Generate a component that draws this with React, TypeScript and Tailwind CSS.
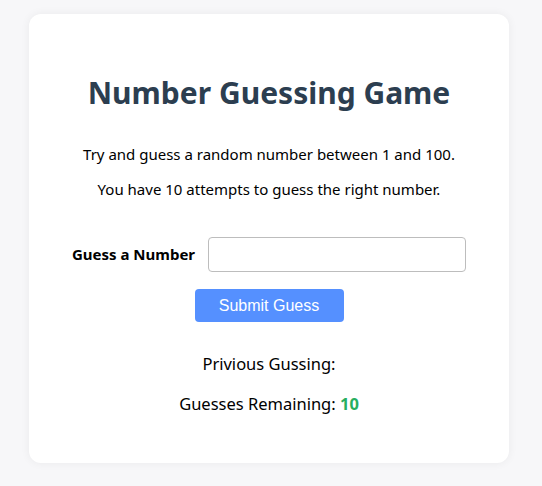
import { useState } from 'react';

export default function App() {
  const [guess, setGuess] = useState('');
  const remaining = 10;

  return (
    <div className="min-h-[486px] w-full bg-[#f7f7f9] pt-[14px] pl-[29px] font-['Noto_Sans',_sans-serif]">
      <div className="w-[480px] h-[449px] rounded-xl bg-white shadow-[0_0_10px_rgba(0,0,0,0.06)] px-5 pt-[60px] text-center">
        {/* Title */}
        <h1 className="text-[30px] leading-[38px] font-bold text-[#2c3e50]">Number Guessing Game</h1>

        {/* Intro */}
        <p className="mt-[32px] text-[15px] leading-5 text-black">
          Try and guess a random number between 1 and 100.
        </p>
        <p className="mt-[15px] text-[15px] leading-5 text-black">
          You have 10 attempts to guess the right number.
        </p>

        {/* Form */}
        <div className="mt-[38px] flex items-center justify-center gap-[13px]">
          <label className="text-[15px] font-bold text-black">Guess a Number</label>
          <input
            type="number"
            value={guess}
            onChange={(e) => setGuess(e.target.value)}
            className="h-[35px] w-[258px] rounded border border-[#bdbdbd] px-2 outline-none"
          />
        </div>
        <button className="mt-[17px] h-[33px] w-[149px] rounded bg-[#5590ff] font-['Liberation_Sans',_sans-serif] text-base text-white">
          Submit Guess
        </button>

        {/* Status */}
        <p className="mt-[30px] text-[16.5px] leading-6 text-black">Privious Gussing:</p>
        <p className="mt-[16px] text-[16.5px] leading-6 text-black">
          Guesses Remaining: <span className="font-bold text-[#27ae60]">{remaining}</span>
        </p>
      </div>
    </div>
  );
}
